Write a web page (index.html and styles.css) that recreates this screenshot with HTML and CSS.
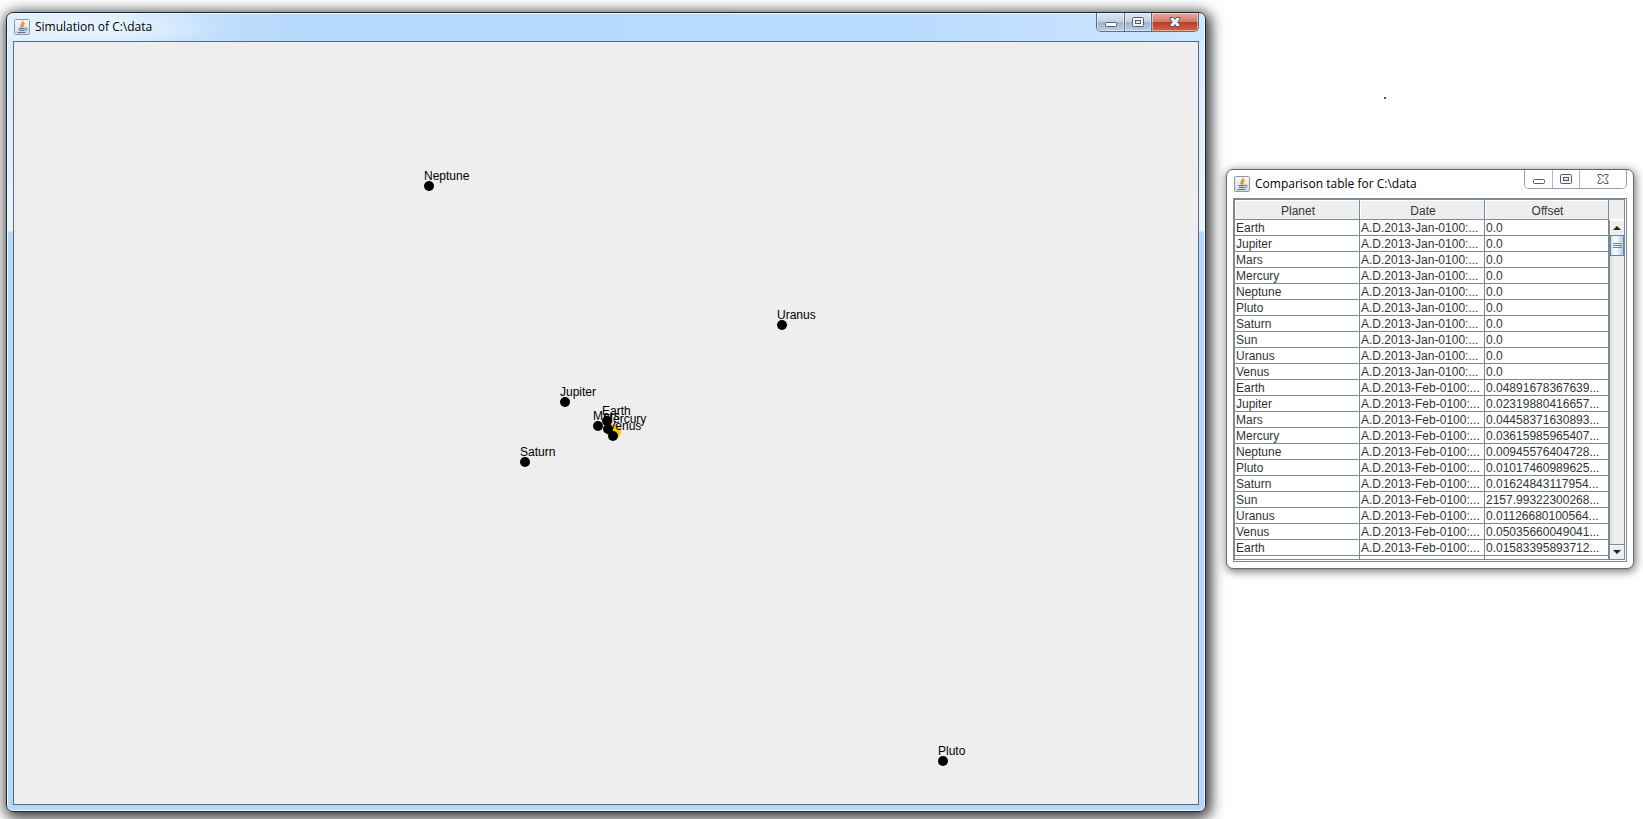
FILE: index.html
```html
<!DOCTYPE html>
<html lang="en">
<head>
<meta charset="utf-8">
<title>Simulation of C:\data</title>
<link rel="stylesheet" href="styles.css">
</head>
<body>
<svg class="defs" aria-hidden="true">
  <defs>
    <linearGradient id="tile" x1="0" y1="0" x2="0" y2="1">
      <stop offset="0" stop-color="#fafbfc"/><stop offset="1" stop-color="#ccd6e0"/>
    </linearGradient>
    <symbol id="java" viewBox="0 0 16 16">
      <rect x="0.5" y="0.5" width="15" height="15" rx="1" fill="url(#tile)" stroke="#8c98a4"/>
      <path d="M8.8 1.8C10 4.2 5.4 5 7.6 8.6M10.6 4.2C8 5.6 8.6 6.6 9 8.4" fill="none" stroke="#ee8a2c" stroke-width="1.5"/>
      <path d="M4.5 9.5h6.5M5 11.3h5.5M3.5 13.5h8" fill="none" stroke="#54779c" stroke-width="1.2"/>
      <path d="M11 9.2c2.8-.6 2.6 2 .2 2.3" fill="none" stroke="#54779c"/>
    </symbol>
    <symbol id="min" viewBox="0 0 14 12">
      <rect x="1.5" y="6.5" width="11" height="4" rx="1" fill="#fff" stroke="#555b6c"/>
    </symbol>
    <symbol id="max" viewBox="0 0 14 12">
      <rect x="1.5" y="1.5" width="11" height="9" rx="1" fill="#f4f5f7" stroke="#555b6c"/>
      <rect x="4.5" y="4.5" width="5" height="3" fill="#dfe5ec" stroke="#555b6c"/>
    </symbol>
    <symbol id="close" viewBox="0 0 14 12">
      <path d="M2 1.500H5.500L7 3.500 8.500 1.500H12v1.500L9.700 6 12 9v1.500H8.500L7 8.500 5.500 10.500H2V9L4.300 6 2 3z" fill="#f6f6f8" stroke="#555b6c"/>
    </symbol>
  </defs>
</svg>
<main class="desktop">
  <section class="window window-active">
    <header class="titlebar">
      <svg class="app-icon"><use href="#java"/></svg>
      <h1 class="title">Simulation of C:\data</h1>
      <div class="controls">
        <button class="control control-min" aria-label="Minimize"><svg class="glyph"><use href="#min"/></svg></button>
        <button class="control" aria-label="Maximize"><svg class="glyph"><use href="#max"/></svg></button>
        <button class="control control-close" aria-label="Close"><svg class="glyph"><use href="#close"/></svg></button>
      </div>
    </header>
    <div class="space">
      <div class="sun"></div>
      <div class="planet neptune">Neptune</div>
      <div class="planet uranus">Uranus</div>
      <div class="planet jupiter">Jupiter</div>
      <div class="planet saturn">Saturn</div>
      <div class="planet pluto">Pluto</div>
      <div class="planet mars">Mars</div>
      <div class="planet earth">Earth</div>
      <div class="planet mercury">Mercury</div>
      <div class="planet venus">Venus</div>
    </div>
  </section>
  <aside class="side">
    <div class="speck"></div>
    <section class="window window-idle">
      <header class="titlebar">
        <svg class="app-icon"><use href="#java"/></svg>
        <h2 class="title">Comparison table for C:\data</h2>
        <div class="controls">
          <button class="control control-min" aria-label="Minimize"><svg class="glyph"><use href="#min"/></svg></button>
          <button class="control" aria-label="Maximize"><svg class="glyph"><use href="#max"/></svg></button>
          <button class="control control-close" aria-label="Close"><svg class="glyph"><use href="#close"/></svg></button>
        </div>
      </header>
      <div class="pane">
        <div class="pane-inner">
          <div class="viewport">
            <table class="offsets">
              <colgroup><col class="col-planet"><col class="col-date"><col></colgroup>
              <thead><tr><th>Planet</th><th>Date</th><th>Offset</th></tr></thead>
              <tbody>
                <tr><td>Earth</td><td>A.D.2013-Jan-0100:...</td><td>0.0</td></tr>
                <tr><td>Jupiter</td><td>A.D.2013-Jan-0100:...</td><td>0.0</td></tr>
                <tr><td>Mars</td><td>A.D.2013-Jan-0100:...</td><td>0.0</td></tr>
                <tr><td>Mercury</td><td>A.D.2013-Jan-0100:...</td><td>0.0</td></tr>
                <tr><td>Neptune</td><td>A.D.2013-Jan-0100:...</td><td>0.0</td></tr>
                <tr><td>Pluto</td><td>A.D.2013-Jan-0100:...</td><td>0.0</td></tr>
                <tr><td>Saturn</td><td>A.D.2013-Jan-0100:...</td><td>0.0</td></tr>
                <tr><td>Sun</td><td>A.D.2013-Jan-0100:...</td><td>0.0</td></tr>
                <tr><td>Uranus</td><td>A.D.2013-Jan-0100:...</td><td>0.0</td></tr>
                <tr><td>Venus</td><td>A.D.2013-Jan-0100:...</td><td>0.0</td></tr>
                <tr><td>Earth</td><td>A.D.2013-Feb-0100:...</td><td>0.04891678367639...</td></tr>
                <tr><td>Jupiter</td><td>A.D.2013-Feb-0100:...</td><td>0.02319880416657...</td></tr>
                <tr><td>Mars</td><td>A.D.2013-Feb-0100:...</td><td>0.04458371630893...</td></tr>
                <tr><td>Mercury</td><td>A.D.2013-Feb-0100:...</td><td>0.03615985965407...</td></tr>
                <tr><td>Neptune</td><td>A.D.2013-Feb-0100:...</td><td>0.00945576404728...</td></tr>
                <tr><td>Pluto</td><td>A.D.2013-Feb-0100:...</td><td>0.01017460989625...</td></tr>
                <tr><td>Saturn</td><td>A.D.2013-Feb-0100:...</td><td>0.01624843117954...</td></tr>
                <tr><td>Sun</td><td>A.D.2013-Feb-0100:...</td><td>2157.99322300268...</td></tr>
                <tr><td>Uranus</td><td>A.D.2013-Feb-0100:...</td><td>0.01126680100564...</td></tr>
                <tr><td>Venus</td><td>A.D.2013-Feb-0100:...</td><td>0.05035660049041...</td></tr>
                <tr><td>Earth</td><td>A.D.2013-Feb-0100:...</td><td>0.01583395893712...</td></tr>
                <tr class="cut"><td></td><td></td><td></td></tr>
              </tbody>
            </table>
          </div>
          <div class="scrollbar">
            <div class="corner"></div>
            <button class="arrow" aria-label="Scroll up"><svg class="arrow-glyph" viewBox="0 0 8 4"><path d="M4 0L8 4H0z"/></svg></button>
            <div class="track"><div class="thumb"></div></div>
            <button class="arrow arrow-down" aria-label="Scroll down"><svg class="arrow-glyph" viewBox="0 0 8 4"><path d="M0 0H8L4 4z"/></svg></button>
          </div>
        </div>
      </div>
    </section>
  </aside>
</main>
</body>
</html>
```
FILE: styles.css
```css
* { box-sizing: border-box; }
body {
  margin: 0;
  background: #fff;
  color: #333;
  font: 12px/15px "Liberation Sans", Arial, sans-serif;
  overflow: hidden;
}
.defs { position: absolute; width: 0; height: 0; }
.desktop {
  display: grid;
  grid-template-columns: minmax(0, 1fr) 408px;
  gap: 20px;
  min-height: 100vh;
  padding: 12px 9px 7px 6px;
}

.window {
  display: flex;
  flex-direction: column;
  padding: 0 6px 6px;
  border: 1px solid #1c2733;
  border-radius: 7px;
}
.window-active {
  background:
    radial-gradient(ellipse 150px 26px at 70px 14px, #e6f3ff 30%, transparent),
    linear-gradient(90deg, #d8ebff, #b6d8fc 25%, #b9dbff 75%, #cfe6ff) top / 100% 28px no-repeat,
    linear-gradient(#d4e9ff, #e6f4ff 218px, #b5d7fb 219px);
  box-shadow: inset 0 0 0 1px #f0f9ff, 2px 3px 14px 3px rgba(0, 0, 0, .8);
}
.window-idle {
  background: #fff;
  border-color: #666;
  box-shadow: 1px 2px 8px 1px rgba(0, 0, 0, .5);
}
.titlebar {
  display: flex;
  align-items: flex-start;
  height: 28px;
}
.app-icon { width: 16px; height: 16px; margin: 6px 5px 0 1px; }
.title {
  flex: 1;
  margin: 6px 0 0;
  color: #000;
  font: 400 12px/16px "Open Sans", "Noto Sans", sans-serif;
}
.controls {
  display: flex;
  height: 19px;
  border: 1px solid #5c6e82;
  border-top: 0;
  border-radius: 0 0 5px 5px;
  overflow: hidden;
}
.control {
  display: grid;
  place-items: center;
  width: 27px;
  padding: 0;
  border: 0;
  border-right: 1px solid #5c6e82;
  background: linear-gradient(#dce8f5, #c3d2e2 50%, #9fb4cb 51%, #b9cee4);
  box-shadow: inset 0 0 0 1px rgba(255, 255, 255, .45);
}
.control-min { width: 28px; }
.control-close {
  width: 46px;
  border-right: 0;
  background: linear-gradient(#e6a99b, #d27a69 48%, #bb3a22 50%, #d4644a);
}
.glyph { width: 14px; height: 12px; }
.window-idle .controls { border-color: #9a9a9a; }
.window-idle .control { background: #fff; border-color: #b5b5b5; }

.space {
  position: relative;
  flex: 1;
  min-height: 300px;
  border: 1px solid #5b6b7b;
  background: #eee;
  overflow: hidden;
  color: #000;
}
.planet { position: absolute; line-height: 14px; margin-top: -12px; }
.planet::after {
  content: "";
  display: block;
  width: 10px;
  height: 10px;
  margin-top: -2px;
  border-radius: 50%;
  background: #000;
}
.sun {
  position: absolute;
  left: 592px;
  top: 382px;
  width: 15px;
  height: 15px;
  border-radius: 50%;
  background: #ffc20e;
}
.neptune { left: 410px; top: 139px; }
.uranus { left: 763px; top: 278px; }
.jupiter { left: 546px; top: 355px; }
.saturn { left: 506px; top: 415px; }
.pluto { left: 924px; top: 714px; }
.mars { left: 579px; top: 379px; }
.earth { left: 588px; top: 374px; }
.mercury { left: 589px; top: 382px; }
.venus { left: 594px; top: 389px; }

.side { padding-top: 85px; }
.speck { width: 2px; height: 2px; margin: 0 0 70px 158px; background: #555; }

.pane {
  padding: 0 1px 1px 0;
  border: 1px solid #7a8a99;
}
.pane-inner {
  display: grid;
  grid-template-columns: minmax(0, 1fr) 15px;
  border: 1px solid #7a8a99;
  background: #eee;
}
.offsets {
  width: 100%;
  table-layout: fixed;
  border-collapse: separate;
  border-spacing: 0;
  background: #fff;
}
.col-planet, .col-date { width: 125px; }
.offsets th {
  height: 20px;
  padding: 3px 0 0 2px;
  border-right: 1px solid #7a8a99;
  border-bottom: 1px solid #7a8a99;
  background: #eee;
  box-shadow: inset 1px 1px 0 #fff;
  font-weight: 400;
  text-align: center;
}
.offsets td {
  height: 16px;
  padding: 1px 0 0 1px;
  border-right: 1px solid #7a8a99;
  border-bottom: 1px solid #7a8a99;
  line-height: 14px;
  white-space: nowrap;
  overflow: hidden;
}
.offsets .cut td { height: 3px; border-bottom: 0; }

.scrollbar { display: flex; flex-direction: column; }
.corner { height: 20px; border-bottom: 1px solid #fff; }
.arrow {
  display: grid;
  place-items: center;
  height: 15px;
  padding: 0;
  border: 0;
  border-left: 1px solid #7a8a99;
  background: #eee;
  box-shadow: inset 1px 1px 0 #fff;
}
.arrow-down { border-top: 1px solid #7a8a99; }
.arrow-glyph { width: 8px; height: 4px; fill: #222; }
.track {
  flex: 1;
  border-left: 1px solid #7a8a99;
  background: linear-gradient(90deg, #ddd, #eee 30%);
}
.thumb {
  height: 21px;
  border: 1px solid #6382bf;
  background:
    repeating-linear-gradient(#6382bf 0 1px, transparent 1px 2px) center / 9px 5px no-repeat,
    linear-gradient(90deg, #d2e2ef, #fff 35%, #b8cfe5);
}
```
